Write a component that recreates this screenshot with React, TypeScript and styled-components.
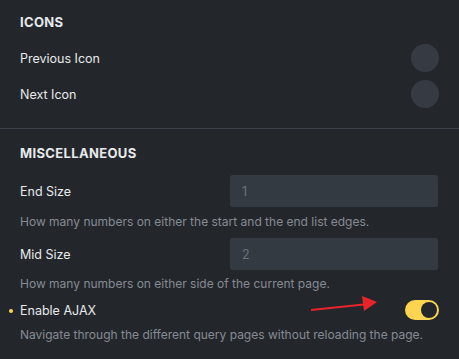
import React, { FC } from 'react'
import styled, { createGlobalStyle } from 'styled-components'

const colors = {
    bg: '#23272c',
    divider: '#3b414a',
    field: '#343a42',
    label: '#e8e9eb',
    muted: '#868b93',
    placeholder: '#6c727b',
    yellow: '#fdd452',
    red: '#e8242a'
}

const GlobalStyle = createGlobalStyle`
    html, body {
        margin: 0;
        padding: 0;
        background: ${colors.bg};
    }
    body {
        font-family: Inter, 'Noto Sans', sans-serif;
        -webkit-font-smoothing: antialiased;
    }
`

const Panel = styled.div`
    width: 459px;
    height: 359px;
    background: ${colors.bg};
    overflow: hidden;
`

const Section = styled.section<{ $top: number; $bottom: number }>`
    padding: ${p => p.$top}px 20px ${p => p.$bottom}px 20px;
`

const Divider = styled.hr`
    margin: 0;
    border: none;
    height: 1px;
    background: ${colors.divider};
`

const Heading = styled.h3`
    margin: 0 0 14px;
    height: 16px;
    line-height: 16px;
    font-size: 13px;
    font-weight: 700;
    letter-spacing: 0.35px;
    text-transform: uppercase;
    color: ${colors.label};
`

const Row = styled.div<{ $gap?: number }>`
    position: relative;
    display: flex;
    align-items: center;
    justify-content: space-between;
    margin-top: ${p => p.$gap ?? 0}px;
`

const Label = styled.span<{ $changed?: boolean }>`
    position: relative;
    top: 1px;
    font-size: 12.5px;
    line-height: 16px;
    color: ${colors.label};

    &::before {
        content: '';
        display: ${p => (p.$changed ? 'block' : 'none')};
        position: absolute;
        left: -11px;
        top: 6px;
        width: 4px;
        height: 4px;
        border-radius: 50%;
        background: ${colors.yellow};
    }
`

const IconPicker = styled.button`
    width: 28px;
    height: 28px;
    padding: 0;
    border: none;
    border-radius: 50%;
    background: #363b43;
    cursor: pointer;
`

const NumberInput = styled.input`
    box-sizing: border-box;
    width: 208px;
    height: 32px;
    margin-right: 1px;
    padding: 0 12px;
    border: none;
    border-radius: 3px;
    background: ${colors.field};
    font-family: inherit;
    font-size: 12.5px;
    color: ${colors.label};
    outline: none;

    &::placeholder {
        color: ${colors.placeholder};
    }
`

const Description = styled.p<{ $gap: number }>`
    margin: ${p => p.$gap}px 0 0;
    font-size: 12px;
    line-height: 16px;
    color: ${colors.muted};
    white-space: nowrap;
`

const Toggle = styled.span<{ $on: boolean }>`
    box-sizing: border-box;
    display: flex;
    align-items: center;
    justify-content: ${p => (p.$on ? 'flex-end' : 'flex-start')};
    width: 34px;
    height: 20px;
    padding: 2px;
    border-radius: 10px;
    background: ${p => (p.$on ? colors.yellow : colors.field)};
`

const Knob = styled.span`
    width: 16px;
    height: 16px;
    border-radius: 50%;
    background: ${colors.bg};
`

const Arrow = styled.svg`
    position: absolute;
    left: 290px;
    top: -6px;
    overflow: visible;
`

type FieldProps = {
    label: string
    value: string
    hint: string
}

const NumberField: FC<FieldProps & { gap: number; hintGap: number }> = ({
    label,
    value,
    hint,
    gap,
    hintGap
}) => (
    <>
        <Row $gap={gap}>
            <Label>{label}</Label>
            <NumberInput placeholder={value} />
        </Row>
        <Description $gap={hintGap}>{hint}</Description>
    </>
)

const App: FC = () => (
    <Panel>
        <GlobalStyle />
        <Section $top={14} $bottom={20}>
            <Heading>Icons</Heading>
            <Row>
                <Label>Previous Icon</Label>
                <IconPicker aria-label="Previous Icon" />
            </Row>
            <Row $gap={8}>
                <Label>Next Icon</Label>
                <IconPicker aria-label="Next Icon" />
            </Row>
        </Section>
        <Divider />
        <Section $top={16} $bottom={0}>
            <Heading>Miscellaneous</Heading>
            <NumberField
                gap={0}
                hintGap={7}
                label="End Size"
                value="1"
                hint="How many numbers on either the start and the end list edges."
            />
            <NumberField
                gap={8}
                hintGap={6}
                label="Mid Size"
                value="2"
                hint="How many numbers on either side of the current page."
            />
            <Row $gap={8}>
                <Label $changed>Enable AJAX</Label>
                <Toggle $on>
                    <Knob />
                </Toggle>
                <Arrow width="70" height="20" viewBox="0 0 70 20">
                    <line x1="1" y1="16" x2="54" y2="10.5" stroke={colors.red} strokeWidth="2.2" />
                    <polygon points="52,2 67,8 54,17" fill={colors.red} />
                </Arrow>
            </Row>
            <Description $gap={7}>
                Navigate through the different query pages without reloading the page.
            </Description>
        </Section>
    </Panel>
)

export default App
